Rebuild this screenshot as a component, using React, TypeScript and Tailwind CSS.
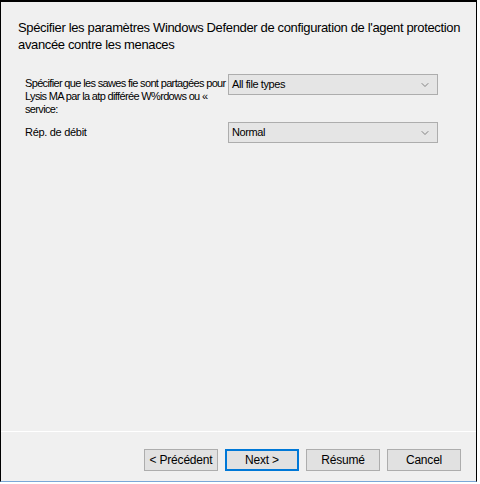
import { ChevronDown } from "lucide-react";

function Select({ value }: { value: string }) {
  return (
    <div className="w-[210px] h-[21px] border border-[#adadad] bg-[#e5e5e5] flex items-center justify-between pl-[3px] pr-[6px] shrink-0">
      <span className="text-[11px] tracking-[-0.4px] text-black">{value}</span>
      <ChevronDown size={12} strokeWidth={1.5} className="text-[#606060]" />
    </div>
  );
}

function Button({ label, primary }: { label: string; primary?: boolean }) {
  return (
    <button
      className={
        "w-[74px] h-[22px] bg-[#e1e1e1] text-[12px] tracking-[-0.2px] text-black flex items-center justify-center " +
        (primary ? "border-2 border-[#0078d7]" : "border border-[#adadad]")
      }
    >
      {label}
    </button>
  );
}

export default function App() {
  return (
    <div className="w-[480px] h-[484px] bg-white font-['Liberation_Sans',Arial,sans-serif]">
      <div className="w-[477px] h-[482px] bg-[#f0f0f0] border-l border-t-2 border-r border-black border-b border-b-[#7aa7d8] flex flex-col">
        <h1 className="pl-[17px] pt-[17px] text-[13px] leading-[17px] font-normal text-black tracking-[-0.35px] whitespace-nowrap">
          Spécifier les paramètres Windows Defender de configuration de l'agent protection
          <br />
          avancée contre les menaces
        </h1>

        <div className="mt-[21px] pl-[24px] flex flex-col gap-[6px]">
          <div className="flex items-start">
            <p className="w-[203px] shrink-0 whitespace-nowrap text-[11px] leading-[13px] tracking-[-0.65px] text-black pt-[3px]">
              Spécifier que les sawes fie sont partagées pour
              <br />
              Lysis MA par la atp différée W%rdows ou «
              <br />
              service:
            </p>
            <Select value="All file types" />
          </div>
          <div className="flex items-center">
            <p className="w-[203px] shrink-0 text-[11px] tracking-[-0.3px] text-black">Rép. de débit</p>
            <Select value="Normal" />
          </div>
        </div>

        <div className="flex-1" />

        <div className="h-px bg-white" />
        <div className="h-[49px] flex items-start justify-end gap-[7px] pt-[17px] pr-[15px]">
          <Button label="< Précédent" />
          <Button label="Next >" primary />
          <Button label="Résumé" />
          <Button label="Cancel" />
        </div>
      </div>
    </div>
  );
}
